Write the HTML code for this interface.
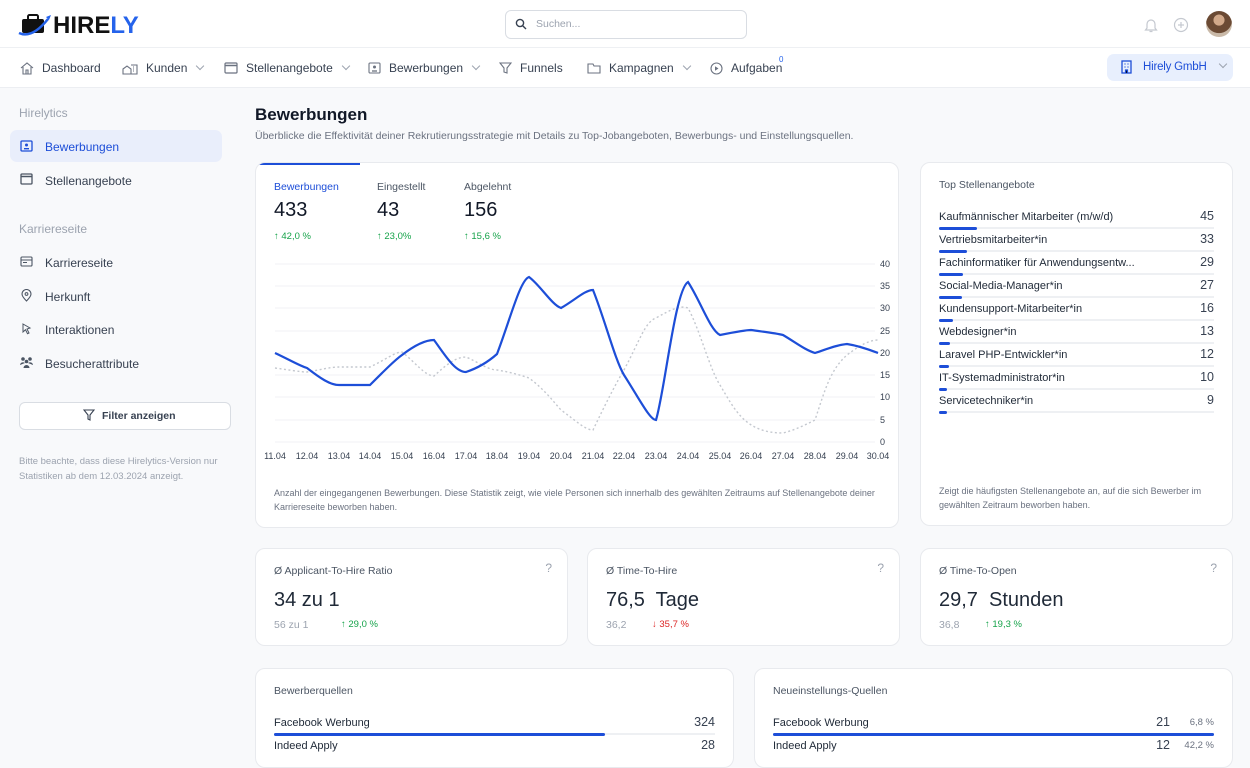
<!DOCTYPE html>
<html><head><meta charset="utf-8"><style>
*{box-sizing:border-box;margin:0;padding:0}
body{width:1250px;height:750px;overflow:hidden;background:#f8f9fb;font-family:"Liberation Sans",sans-serif;color:#1f2937;position:relative}
.a{position:absolute}
.hdr{left:0;top:0;width:1250px;height:48px;background:#fff;border-bottom:1px solid #eef0f3}
.nav{left:0;top:48px;width:1250px;height:40px;background:#fff;border-bottom:1px solid #eceef2}
.ni{position:absolute;top:13px;font-size:12px;color:#374151;display:flex;align-items:center;gap:8px}
.chev{width:6px;height:6px;border-right:1.3px solid #9ca3af;border-bottom:1.3px solid #9ca3af;transform:rotate(45deg);margin-left:2px;margin-top:-4px}
.card{position:absolute;background:#fff;border:1px solid #e8eaee;border-radius:10px}
.sb{position:absolute;left:45px;font-size:12px;color:#374151}
.row{position:absolute;left:18px;right:18px;font-size:11px;color:#1f2937}
.row .v{position:absolute;right:0;top:-2px;font-size:12.5px;color:#374151}
.row .bg{position:absolute;left:0;right:0;top:16px;height:2px;background:#eef0f3}
.row .fg{position:absolute;left:0;top:16px;height:3px;background:#1d4ed8;border-radius:2px}
.gl{color:#16a34a;font-size:9.5px}
.lbl{font-size:10.5px;color:#4b5563}
</style></head><body>
<div class="a hdr"></div>
<svg class="a" style="left:18px;top:13px" width="36" height="24" viewBox="0 0 36 24"><rect x="4" y="6" width="22" height="14" rx="2" fill="#111"/><rect x="10" y="2" width="10" height="5" rx="1.5" fill="none" stroke="#111" stroke-width="2"/><path d="M1 20 Q14 26 30 6" stroke="#2563eb" stroke-width="2.5" fill="none"/><path d="M28 4 L33 2 L31 7 Z" fill="#2563eb"/></svg>
<div class="a" style="left:53px;top:12px;font-size:24px;font-weight:bold;letter-spacing:0px;color:#111">HIRE<span style="color:#2563eb">LY</span></div>
<div class="a" style="left:505px;top:10px;width:242px;height:29px;border:1px solid #d9dde3;border-radius:6px;background:#fff"></div>
<svg class="a" style="left:515px;top:18px" width="12" height="12" viewBox="0 0 12 12"><circle cx="5" cy="5" r="3.6" stroke="#374151" stroke-width="1.4" fill="none"/><path d="M7.7 7.7 11 11" stroke="#374151" stroke-width="1.4"/></svg>
<div class="a" style="left:536px;top:18px;font-size:10.5px;color:#9ca3af">Suchen...</div>
<svg class="a" style="left:1144px;top:18px" width="14" height="15" viewBox="0 0 14 15"><path d="M3 10V6a4 4 0 0 1 8 0v4l1.5 2h-11z M5.5 13.5h3" stroke="#c5c9d0" stroke-width="1.2" fill="none"/></svg>
<svg class="a" style="left:1173px;top:17px" width="16" height="16" viewBox="0 0 16 16"><circle cx="8" cy="8" r="6.5" stroke="#c5c9d0" stroke-width="1.2" fill="none"/><path d="M8 5v6M5 8h6" stroke="#c5c9d0" stroke-width="1.2"/></svg>
<div class="a" style="left:1206px;top:11px;width:26px;height:26px;border-radius:50%;background:radial-gradient(circle at 50% 35%,#d2a98a 0 25%,#6b4a34 27% 60%,#c9b9a8 62%)"></div>
<div class="a nav"></div>
<div class="ni" style="left:20px;top:61px"><svg width="14" height="13" viewBox="0 0 14 13"><path d="M1 6 7 1l6 5M3 5v7h8V5M6 12V8h2v4" stroke="#6b7280" stroke-width="1.1" fill="none"/></svg>Dashboard</div>
<div class="ni" style="left:122px;top:61px"><svg width="16" height="13" viewBox="0 0 16 13"><path d="M1 7l4-3 4 3v5H1z M9 3h6v9H9 M11 5h1M11 7h1M11 9h1" stroke="#6b7280" stroke-width="1.1" fill="none"/></svg>Kunden<span class="chev"></span></div>
<div class="ni" style="left:224px;top:61px"><svg width="14" height="12" viewBox="0 0 14 12"><rect x="1" y="1" width="12" height="10" rx="1" stroke="#6b7280" stroke-width="1.2" fill="none"/><path d="M1 3.5h12" stroke="#6b7280" stroke-width="1.5"/></svg>Stellenangebote<span class="chev"></span></div>
<div class="ni" style="left:368px;top:61px"><svg width="13" height="12" viewBox="0 0 13 12"><rect x="1" y="1" width="11" height="10" rx="1" stroke="#6b7280" stroke-width="1.1" fill="none"/><circle cx="6.5" cy="5" r="1.5" fill="#6b7280"/><path d="M4 9h5" stroke="#6b7280" stroke-width="1.3"/></svg>Bewerbungen<span class="chev"></span></div>
<div class="ni" style="left:499px;top:61px"><svg width="13" height="12" viewBox="0 0 13 12"><path d="M1 1h11L8 6v5L5 10V6z" stroke="#6b7280" stroke-width="1.1" fill="none"/></svg>Funnels</div>
<div class="ni" style="left:587px;top:61px"><svg width="14" height="12" viewBox="0 0 14 12"><path d="M1 2h5l1 2h6v7H1z" stroke="#6b7280" stroke-width="1.1" fill="none"/></svg>Kampagnen<span class="chev"></span></div>
<div class="ni" style="left:710px;top:61px"><svg width="13" height="13" viewBox="0 0 13 13"><circle cx="6.5" cy="6.5" r="5.5" stroke="#6b7280" stroke-width="1.1" fill="none"/><path d="M5 4.3v4.4l3.5-2.2z" fill="#6b7280"/></svg>Aufgaben</div>
<div class="a" style="left:779px;top:55px;font-size:8px;color:#2563eb">0</div>
<div class="a" style="left:1107px;top:54px;width:126px;height:27px;background:#e8effd;border-radius:7px"></div>
<svg class="a" style="left:1121px;top:60px" width="11" height="14" viewBox="0 0 11 14"><rect x="1" y="1" width="9" height="12" stroke="#1d4ed8" stroke-width="1.3" fill="none"/><path d="M3.5 4h1M6.5 4h1M3.5 7h1M6.5 7h1M4.5 13v-3h2v3" stroke="#1d4ed8" stroke-width="1.2"/></svg>
<div class="a" style="left:1143px;top:61px;font-size:11.5px;color:#1d4ed8;letter-spacing:-0.2px">Hirely GmbH</div>
<div class="a chev" style="left:1218px;top:65px"></div>

<div class="a" style="left:19px;top:106px;font-size:12px;color:#9ca3af">Hirelytics</div>
<div class="a" style="left:10px;top:130px;width:212px;height:32px;background:#e9eefb;border-radius:7px"></div>
<svg class="a" style="left:20px;top:140px" width="13" height="12" viewBox="0 0 13 12"><rect x="1" y="1" width="11" height="10" rx="1" stroke="#1d4ed8" stroke-width="1.3" fill="none"/><circle cx="6.5" cy="5" r="1.5" fill="#1d4ed8"/><path d="M4 8.7h5" stroke="#1d4ed8" stroke-width="1.4"/></svg>
<div class="sb" style="top:140px;color:#1d4ed8">Bewerbungen</div>
<svg class="a" style="left:20px;top:173px" width="13" height="12" viewBox="0 0 13 12"><rect x="1" y="1" width="11" height="10" rx="1" stroke="#4b5563" stroke-width="1.3" fill="none"/><path d="M1 3.5h11" stroke="#4b5563" stroke-width="1.5"/></svg>
<div class="sb" style="top:174px">Stellenangebote</div>
<div class="a" style="left:19px;top:222px;font-size:12px;color:#9ca3af">Karriereseite</div>
<svg class="a" style="left:20px;top:256px" width="13" height="11" viewBox="0 0 13 11"><rect x="1" y="1" width="11" height="9" rx="1" stroke="#4b5563" stroke-width="1.1" fill="none"/><path d="M1 4h11M3 6.5h4" stroke="#4b5563" stroke-width="1.1"/></svg>
<div class="sb" style="top:256px">Karriereseite</div>
<svg class="a" style="left:21px;top:289px" width="11" height="13" viewBox="0 0 11 13"><path d="M5.5 12S1 7.5 1 5a4.5 4.5 0 0 1 9 0c0 2.5-4.5 7-4.5 7z" stroke="#4b5563" stroke-width="1.1" fill="none"/><circle cx="5.5" cy="5" r="1.4" stroke="#4b5563" fill="none"/></svg>
<div class="sb" style="top:290px">Herkunft</div>
<svg class="a" style="left:22px;top:323px" width="10" height="12" viewBox="0 0 10 12"><path d="M1 1l7 4-3 1 2 4-1.5.7-2-4L1 9z" stroke="#4b5563" stroke-width="1" fill="none"/></svg>
<div class="sb" style="top:323px">Interaktionen</div>
<svg class="a" style="left:19px;top:356px" width="15" height="12" viewBox="0 0 15 12"><circle cx="4" cy="3" r="1.8" fill="#4b5563"/><circle cx="11" cy="3" r="1.8" fill="#4b5563"/><circle cx="7.5" cy="5.5" r="1.8" fill="#4b5563"/><path d="M1 9a3 3 0 0 1 5-2M14 9a3 3 0 0 0-5-2M4.5 12a3 3 0 0 1 6 0z" fill="#4b5563"/></svg>
<div class="sb" style="top:357px">Besucherattribute</div>
<div class="a" style="left:19px;top:402px;width:212px;height:28px;background:#fff;border:1px solid #d9dde3;border-radius:6px"></div>
<svg class="a" style="left:83px;top:409px" width="12" height="12" viewBox="0 0 12 12"><path d="M1 1h10L7 6v5L5 10V6z" stroke="#374151" stroke-width="1.1" fill="none"/></svg>
<div class="a" style="left:102px;top:410px;font-size:10.5px;color:#374151;font-weight:bold">Filter anzeigen</div>
<div class="a" style="left:19px;top:454px;font-size:9.5px;color:#9ca3af;line-height:15px;width:215px">Bitte beachte, dass diese Hirelytics-Version nur Statistiken ab dem 12.03.2024 anzeigt.</div>

<div class="a" style="left:255px;top:105px;font-size:17px;font-weight:bold;color:#111827">Bewerbungen</div>
<div class="a" style="left:255px;top:130px;font-size:10.5px;color:#6b7280">Überblicke die Effektivität deiner Rekrutierungsstrategie mit Details zu Top-Jobangeboten, Bewerbungs- und Einstellungsquellen.</div>

<div class="card" style="left:255px;top:162px;width:644px;height:366px;overflow:hidden">
<div class="a" style="left:0;top:0;width:104px;height:2px;background:#1d4ed8"></div>
<div class="a lbl" style="left:18px;top:18px;color:#1d4ed8">Bewerbungen</div>
<div class="a lbl" style="left:121px;top:18px">Eingestellt</div>
<div class="a lbl" style="left:208px;top:18px">Abgelehnt</div>
<div class="a" style="left:18px;top:36px;font-size:20px;color:#111827">433</div>
<div class="a" style="left:121px;top:36px;font-size:20px;color:#111827">43</div>
<div class="a" style="left:208px;top:36px;font-size:20px;color:#111827">156</div>
<div class="a gl" style="left:18px;top:68px">↑ 42,0 %</div>
<div class="a gl" style="left:121px;top:68px">↑ 23,0%</div>
<div class="a gl" style="left:208px;top:68px">↑ 15,6 %</div>
<div class="a" style="left:18px;top:323px;width:612px;font-size:9px;line-height:14px;color:#6b7280">Anzahl der eingegangenen Bewerbungen. Diese Statistik zeigt, wie viele Personen sich innerhalb des gewählten Zeitraums auf Stellenangebote deiner Karriereseite beworben haben.</div>
</div>
<svg class="a" style="left:255px;top:250px" width="650" height="215" viewBox="255 250 650 215" font-family="Liberation Sans" font-size="9" fill="#374151">
<g stroke="#f0f1f4" stroke-width="1">
<line x1="275" x2="875" y1="264" y2="264"/><line x1="275" x2="875" y1="286" y2="286"/><line x1="275" x2="875" y1="308" y2="308"/><line x1="275" x2="875" y1="331" y2="331"/><line x1="275" x2="875" y1="353" y2="353"/><line x1="275" x2="875" y1="375" y2="375"/><line x1="275" x2="875" y1="397" y2="397"/><line x1="275" x2="875" y1="420" y2="420"/><line x1="275" x2="875" y1="442" y2="442"/></g>
<g text-anchor="start"><text x="880" y="267">40</text><text x="880" y="289">35</text><text x="880" y="311">30</text><text x="880" y="334">25</text><text x="880" y="356">20</text><text x="880" y="378">15</text><text x="880" y="400">10</text><text x="880" y="423">5</text><text x="880" y="445">0</text></g>
<g text-anchor="middle"><text x="275" y="459">11.04</text><text x="307" y="459">12.04</text><text x="339" y="459">13.04</text><text x="370" y="459">14.04</text><text x="402" y="459">15.04</text><text x="434" y="459">16.04</text><text x="466" y="459">17.04</text><text x="497" y="459">18.04</text><text x="529" y="459">19.04</text><text x="561" y="459">20.04</text><text x="593" y="459">21.04</text><text x="624" y="459">22.04</text><text x="656" y="459">23.04</text><text x="688" y="459">24.04</text><text x="720" y="459">25.04</text><text x="751" y="459">26.04</text><text x="783" y="459">27.04</text><text x="815" y="459">28.04</text><text x="847" y="459">29.04</text><text x="878" y="459">30.04</text></g>
<path d="M275 368 C290 370 300 372 307 372 C320 370 330 367 339 367 L370 367 C385 360 395 352 402 352 C415 362 425 376 434 376 C445 366 455 357 466 357 C478 362 488 370 497 370 C510 372 520 375 529 378 C545 390 552 400 561 410 C575 420 585 430 593 430 C605 405 615 385 624 370 C640 340 645 322 656 318 C670 310 680 305 688 308 C700 330 710 370 720 385 C735 410 745 433 783 433 C795 430 805 425 815 420 C825 390 830 370 847 355 C860 345 870 340 878 340" stroke="#c4c8cf" stroke-width="1.4" stroke-dasharray="2 2.5" fill="none"/>
<path d="M275 353 C290 360 300 366 307 368 C320 378 330 385 339 385 L370 385 C385 370 395 360 402 355 C415 345 425 340 434 340 C445 355 455 372 466 372 C478 368 488 362 497 354 C510 320 520 280 529 277 C540 285 552 305 561 308 C575 300 585 290 593 290 C605 320 615 360 624 375 C640 400 650 420 656 420 C665 390 675 290 688 282 C700 300 710 330 720 335 C735 332 745 330 751 330 C765 332 775 333 783 335 C795 342 805 350 815 353 C825 350 835 345 847 344 C860 346 870 350 878 353" stroke="#1d4ed8" stroke-width="2.2" fill="none"/>
</svg>

<div class="card" style="left:920px;top:162px;width:313px;height:364px">
<div class="a" style="left:18px;top:16px;font-size:10.5px;color:#4b5563">Top Stellenangebote</div>
<div class="row" style="top:48px">Kaufmännischer Mitarbeiter (m/w/d)<span class="v">45</span><div class="bg"></div><div class="fg" style="width:38px"></div></div>
<div class="row" style="top:71px">Vertriebsmitarbeiter*in<span class="v">33</span><div class="bg"></div><div class="fg" style="width:28px"></div></div>
<div class="row" style="top:94px">Fachinformatiker für Anwendungsentw...<span class="v">29</span><div class="bg"></div><div class="fg" style="width:24px"></div></div>
<div class="row" style="top:117px">Social-Media-Manager*in<span class="v">27</span><div class="bg"></div><div class="fg" style="width:23px"></div></div>
<div class="row" style="top:140px">Kundensupport-Mitarbeiter*in<span class="v">16</span><div class="bg"></div><div class="fg" style="width:14px"></div></div>
<div class="row" style="top:163px">Webdesigner*in<span class="v">13</span><div class="bg"></div><div class="fg" style="width:11px"></div></div>
<div class="row" style="top:186px">Laravel PHP-Entwickler*in<span class="v">12</span><div class="bg"></div><div class="fg" style="width:10px"></div></div>
<div class="row" style="top:209px">IT-Systemadministrator*in<span class="v">10</span><div class="bg"></div><div class="fg" style="width:8px"></div></div>
<div class="row" style="top:232px">Servicetechniker*in<span class="v">9</span><div class="bg"></div><div class="fg" style="width:8px"></div></div>
<div class="a" style="left:18px;top:321px;width:280px;font-size:9px;line-height:14px;color:#6b7280">Zeigt die häufigsten Stellenangebote an, auf die sich Bewerber im gewählten Zeitraum beworben haben.</div>
</div>

<div class="card" style="left:255px;top:548px;width:313px;height:98px">
<div class="a lbl" style="left:18px;top:16px">Ø Applicant-To-Hire Ratio</div><div class="a" style="right:15px;top:12px;font-size:12px;color:#9ca3af">?</div>
<div class="a" style="left:18px;top:40px;font-size:20px;color:#1f2937">34 zu 1</div>
<div class="a" style="left:18px;top:70px;font-size:10.5px;color:#9ca3af">56 zu 1</div><div class="a gl" style="left:85px;top:70px">↑ 29,0 %</div>
</div>
<div class="card" style="left:587px;top:548px;width:313px;height:98px">
<div class="a lbl" style="left:18px;top:16px">Ø Time-To-Hire</div><div class="a" style="right:15px;top:12px;font-size:12px;color:#9ca3af">?</div>
<div class="a" style="left:18px;top:40px;font-size:20px;color:#1f2937">76,5&nbsp; Tage</div>
<div class="a" style="left:18px;top:70px;font-size:10.5px;color:#9ca3af">36,2</div><div class="a" style="left:64px;top:70px;font-size:9.5px;color:#dc2626">↓ 35,7 %</div>
</div>
<div class="card" style="left:920px;top:548px;width:313px;height:98px">
<div class="a lbl" style="left:18px;top:16px">Ø Time-To-Open</div><div class="a" style="right:15px;top:12px;font-size:12px;color:#9ca3af">?</div>
<div class="a" style="left:18px;top:40px;font-size:20px;color:#1f2937">29,7&nbsp; Stunden</div>
<div class="a" style="left:18px;top:70px;font-size:10.5px;color:#9ca3af">36,8</div><div class="a gl" style="left:64px;top:70px">↑ 19,3 %</div>
</div>

<div class="card" style="left:255px;top:668px;width:479px;height:100px">
<div class="a lbl" style="left:18px;top:16px">Bewerberquellen</div>
<div class="row" style="top:48px">Facebook Werbung<span class="v">324</span><div class="bg"></div><div class="fg" style="width:331px"></div></div>
<div class="row" style="top:71px">Indeed Apply<span class="v">28</span></div>
</div>
<div class="card" style="left:754px;top:668px;width:479px;height:100px">
<div class="a lbl" style="left:18px;top:16px">Neueinstellungs-Quellen</div>
<div class="row" style="top:48px">Facebook Werbung<span class="v" style="right:44px">21</span><span class="v" style="font-size:9.5px;color:#6b7280;top:0">6,8 %</span><div class="bg"></div><div class="fg" style="width:100%"></div></div>
<div class="row" style="top:71px">Indeed Apply<span class="v" style="right:44px">12</span><span class="v" style="font-size:9.5px;color:#6b7280;top:0">42,2 %</span></div>
</div>
</body></html>
